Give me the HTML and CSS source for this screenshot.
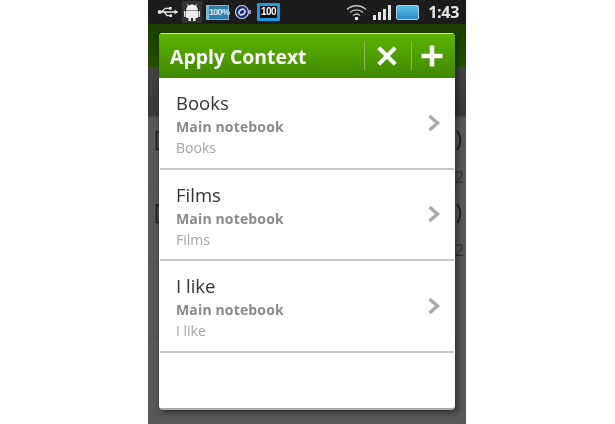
FILE: index.html
```html
<!DOCTYPE html>
<html lang="en">
<head>
    <meta charset="UTF-8">
    <meta name="viewport" content="width=device-width, initial-scale=1.0">
    <title>Apply Context</title>
    <link rel="stylesheet" href="styles.css">
</head>
<body>
    <div class="phone">
        <div class="status_bar">
            <svg class="icon_usb" width="22" height="14" viewBox="0 0 24 14">
                <path d="M1 7H20M5 7L9 3H13M8 7L11 11H14" fill="none" stroke="#e8e8e8" stroke-width="1.4"/>
                <circle cx="3" cy="7" r="2.2" fill="#e8e8e8"/>
                <rect x="13" y="1.5" width="3" height="3" fill="#e8e8e8"/>
                <circle cx="15" cy="11" r="1.6" fill="#e8e8e8"/>
                <path d="M19 4.5L23.5 7L19 9.500Z" fill="#e8e8e8"/>
            </svg>
            <div class="icon_android">
                <svg width="16" height="18" viewBox="0 0 16 18">
                    <path d="M2 7.500A6 6 0 0 1 14 7.500Z" fill="#eee"/>
                    <path d="M4.500 3L3.300 1M11.500 3L12.700 1" stroke="#eee" stroke-width="0.9"/>
                    <rect x="2" y="8" width="12" height="7" rx="1" fill="#eee"/>
                    <rect x="0" y="8" width="1.500" height="6" fill="#ddd"/>
                    <rect x="14.500" y="8" width="1.500" height="6" fill="#ddd"/>
                    <rect x="4.500" y="15" width="2.500" height="3" fill="#eee"/>
                    <rect x="9" y="15" width="2.500" height="3" fill="#eee"/>
                </svg>
            </div>
            <div class="batt_small">100%</div>
            <svg class="icon_sync" width="18" height="16" viewBox="0 0 18 16">
                <circle cx="8" cy="8" r="6.500" fill="#1b2a78" stroke="#c9cfe8" stroke-width="1.200"/>
                <path d="M4.500 9.500C6 4 10 4.500 10.500 6.500M11.500 6.500C10 12 6 11.500 5.500 9.500" fill="none" stroke="#e6e9f5" stroke-width="1.500"/>
                <rect x="15" y="6" width="2" height="4" fill="#8f98c0"/>
            </svg>
            <div class="batt_big">100</div>
            <div class="status_right">
                <svg width="21" height="18" viewBox="0 0 21 18">
                    <path d="M1 6.500C6 1.500 15 1.500 20 6.500M4 9.500C7.500 6 13.500 6 17 9.500M7 12.500C9 10.800 12 10.800 14 12.500" fill="none" stroke="#c8c8c8" stroke-width="1.300"/>
                    <circle cx="10.500" cy="15.500" r="1.800" fill="#eee"/>
                </svg>
                <div class="signal">
                    <span class="bar1"></span><span class="bar2"></span><span class="bar3"></span><span class="bar4"></span>
                </div>
                <div class="battery"></div>
                <div id="clock">1:43</div>
            </div>
        </div>

        <div class="app_bar"></div>
        <div class="tool_bar"></div>
        <div class="bg_row"><span>[</span><span>)</span><span class="bg_num">2</span></div>
        <div class="bg_row"><span>[</span><span>)</span><span class="bg_num">2</span></div>
        <div class="bg_row"></div>

        <div class="dialog">
            <div class="dialog_head">
                <div class="dialog_title">Apply Context</div>
                <div class="head_btn btn_close">
                    <svg width="22" height="22" viewBox="0 0 20 20">
                        <path d="M2.500 2.500L17.500 17.500M17.500 2.500L2.500 17.500" stroke="#fff" stroke-width="3.600"/>
                    </svg>
                </div>
                <div class="head_btn btn_add">
                    <svg width="24" height="24" viewBox="0 0 24 24">
                        <path d="M12 1.500V22.500M1.500 12H22.500" stroke="#fff" stroke-width="4.600"/>
                    </svg>
                </div>
            </div>
            <div class="item">
                <div class="item_text">
                    <div class="item_name">Books</div>
                    <div class="item_book">Main notebook</div>
                    <div class="item_path">Books</div>
                </div>
                <svg class="chevron" width="14" height="18" viewBox="0 0 14 18">
                    <path d="M2.500 2L10.500 9L2.500 16" fill="none" stroke="#a8a8a8" stroke-width="3.400"/>
                </svg>
            </div>
            <div class="item">
                <div class="item_text">
                    <div class="item_name">Films</div>
                    <div class="item_book">Main notebook</div>
                    <div class="item_path">Films</div>
                </div>
                <svg class="chevron" width="14" height="18" viewBox="0 0 14 18">
                    <path d="M2.500 2L10.500 9L2.500 16" fill="none" stroke="#a8a8a8" stroke-width="3.400"/>
                </svg>
            </div>
            <div class="item">
                <div class="item_text">
                    <div class="item_name">I like</div>
                    <div class="item_book">Main notebook</div>
                    <div class="item_path">I like</div>
                </div>
                <svg class="chevron" width="14" height="18" viewBox="0 0 14 18">
                    <path d="M2.500 2L10.500 9L2.500 16" fill="none" stroke="#a8a8a8" stroke-width="3.400"/>
                </svg>
            </div>
        </div>
    </div>
</body>
</html>
```
FILE: styles.css
```css
html, body {
    margin: 0;
    height: 100%;
    background-color: #fff;
    overflow: hidden;
}

.phone {
    position: relative;
    width: 318px;
    height: 424px;
    margin-left: 148px;
    background-color: #585858;
    font-family: "Open Sans", "Noto Sans", sans-serif;
    overflow: hidden;
    filter: blur(0.4px);
}

/* status bar */
.status_bar {
    display: flex;
    align-items: center;
    height: 24px;
    padding-left: 9px;
    background-color: #1c1c1c;
}
.icon_usb {
    margin-right: 3px;
}
.icon_android {
    display: flex;
    justify-content: center;
    align-items: center;
    width: 20px;
    height: 22px;
    margin-right: 4px;
    background-color: #333;
}
.batt_small {
    width: 19px;
    height: 13px;
    margin-right: 5px;
    border: 1px solid #7fb4d4;
    border-left-width: 3px;
    background-color: #2f7fae;
    color: #d8ecf8;
    font: bold 9px/13px "Liberation Sans", sans-serif;
    text-align: center;
    letter-spacing: -0.7px;
}
.icon_sync {
    margin-right: 5px;
}
.batt_big {
    width: 17px;
    height: 12px;
    border: 3px solid #1e9ae0;
    border-radius: 1px;
    background-color: #0c0c0c;
    color: #fff;
    font: bold 10px/12px "Liberation Sans", sans-serif;
    text-align: center;
    letter-spacing: -0.5px;
}
.status_right {
    display: flex;
    align-items: center;
    margin-left: auto;
    margin-right: 7px;
}
.signal {
    display: flex;
    align-items: flex-end;
    gap: 2px;
    height: 15px;
    margin-left: 6px;
}
.signal span {
    width: 3px;
    background-color: #e4e4e4;
}
.bar1 { height: 5px; }
.bar2 { height: 8px; }
.bar3 { height: 11px; }
.bar4 { height: 15px; }
.battery {
    width: 21px;
    height: 13px;
    margin-left: 5px;
    border: 1px solid #9fd2ea;
    border-radius: 2px;
    background: linear-gradient(#5cc0ea, #2a8ec8);
}
#clock {
    margin-left: 9px;
    color: #e6e6e6;
    font-size: 16px;
    font-weight: 700;
    letter-spacing: -0.3px;
}

/* dimmed page behind the dialog */
.app_bar {
    height: 43px;
    background: linear-gradient(#1c3e00, #245000);
}
.tool_bar {
    height: 49px;
    border-bottom: 2px solid #4c4c4c;
    background: linear-gradient(#444, #383838);
}
.bg_row {
    display: flex;
    justify-content: space-between;
    position: relative;
    height: 73px;
    padding: 5px 4px 0 6px;
    border-bottom: 1px solid #525252;
    box-sizing: border-box;
    color: #1e1e1e;
    font-size: 22px;
}
.bg_num {
    position: absolute;
    right: 2px;
    top: 48px;
    color: #333;
    font-size: 16px;
}

/* dialog */
.dialog {
    position: absolute;
    top: 33px;
    left: 11px;
    width: 296px;
    height: 377px;
    box-sizing: border-box;
    border-radius: 4px;
    background-color: #fff;
    border-bottom: 2px solid #aaa;
    box-shadow: 2px 2px 6px rgba(0, 0, 0, 0.55);
    overflow: hidden;
}
.dialog_head {
    display: flex;
    align-items: center;
    height: 45px;
    border-top: 1px solid #cfe6b0;
    box-sizing: border-box;
    background: linear-gradient(#5cb400, #3f8800);
}
.dialog_title {
    flex: 1;
    padding-left: 11px;
    color: #fff;
    font-size: 19.400px;
    font-weight: 700;
}
.head_btn {
    display: flex;
    justify-content: center;
    align-items: center;
    width: 47px;
    height: 28px;
    border-left: 1px solid #8dbb5c;
    box-sizing: border-box;
}
.btn_close {
    padding-right: 3px;
}
.btn_add {
    width: 44px;
    padding-right: 4px;
}
.item {
    display: flex;
    justify-content: space-between;
    align-items: center;
    height: 91.500px;
    margin: 0 1px;
    padding: 0 13px 0 16px;
    box-sizing: border-box;
    border-bottom: 2px solid #c6c6c6;
}
.item_text {
    padding-top: 3px;
}
.item_name {
    color: #333;
    font-size: 18.500px;
    line-height: 26px;
}
.item_book {
    margin-top: 1px;
    color: #8a8a8a;
    font-size: 14px;
    font-weight: 700;
    line-height: 20px;
    letter-spacing: 0.15px;
}
.item_path {
    margin-top: 1px;
    color: #a4a4a4;
    font-size: 14px;
    line-height: 20px;
}
```
